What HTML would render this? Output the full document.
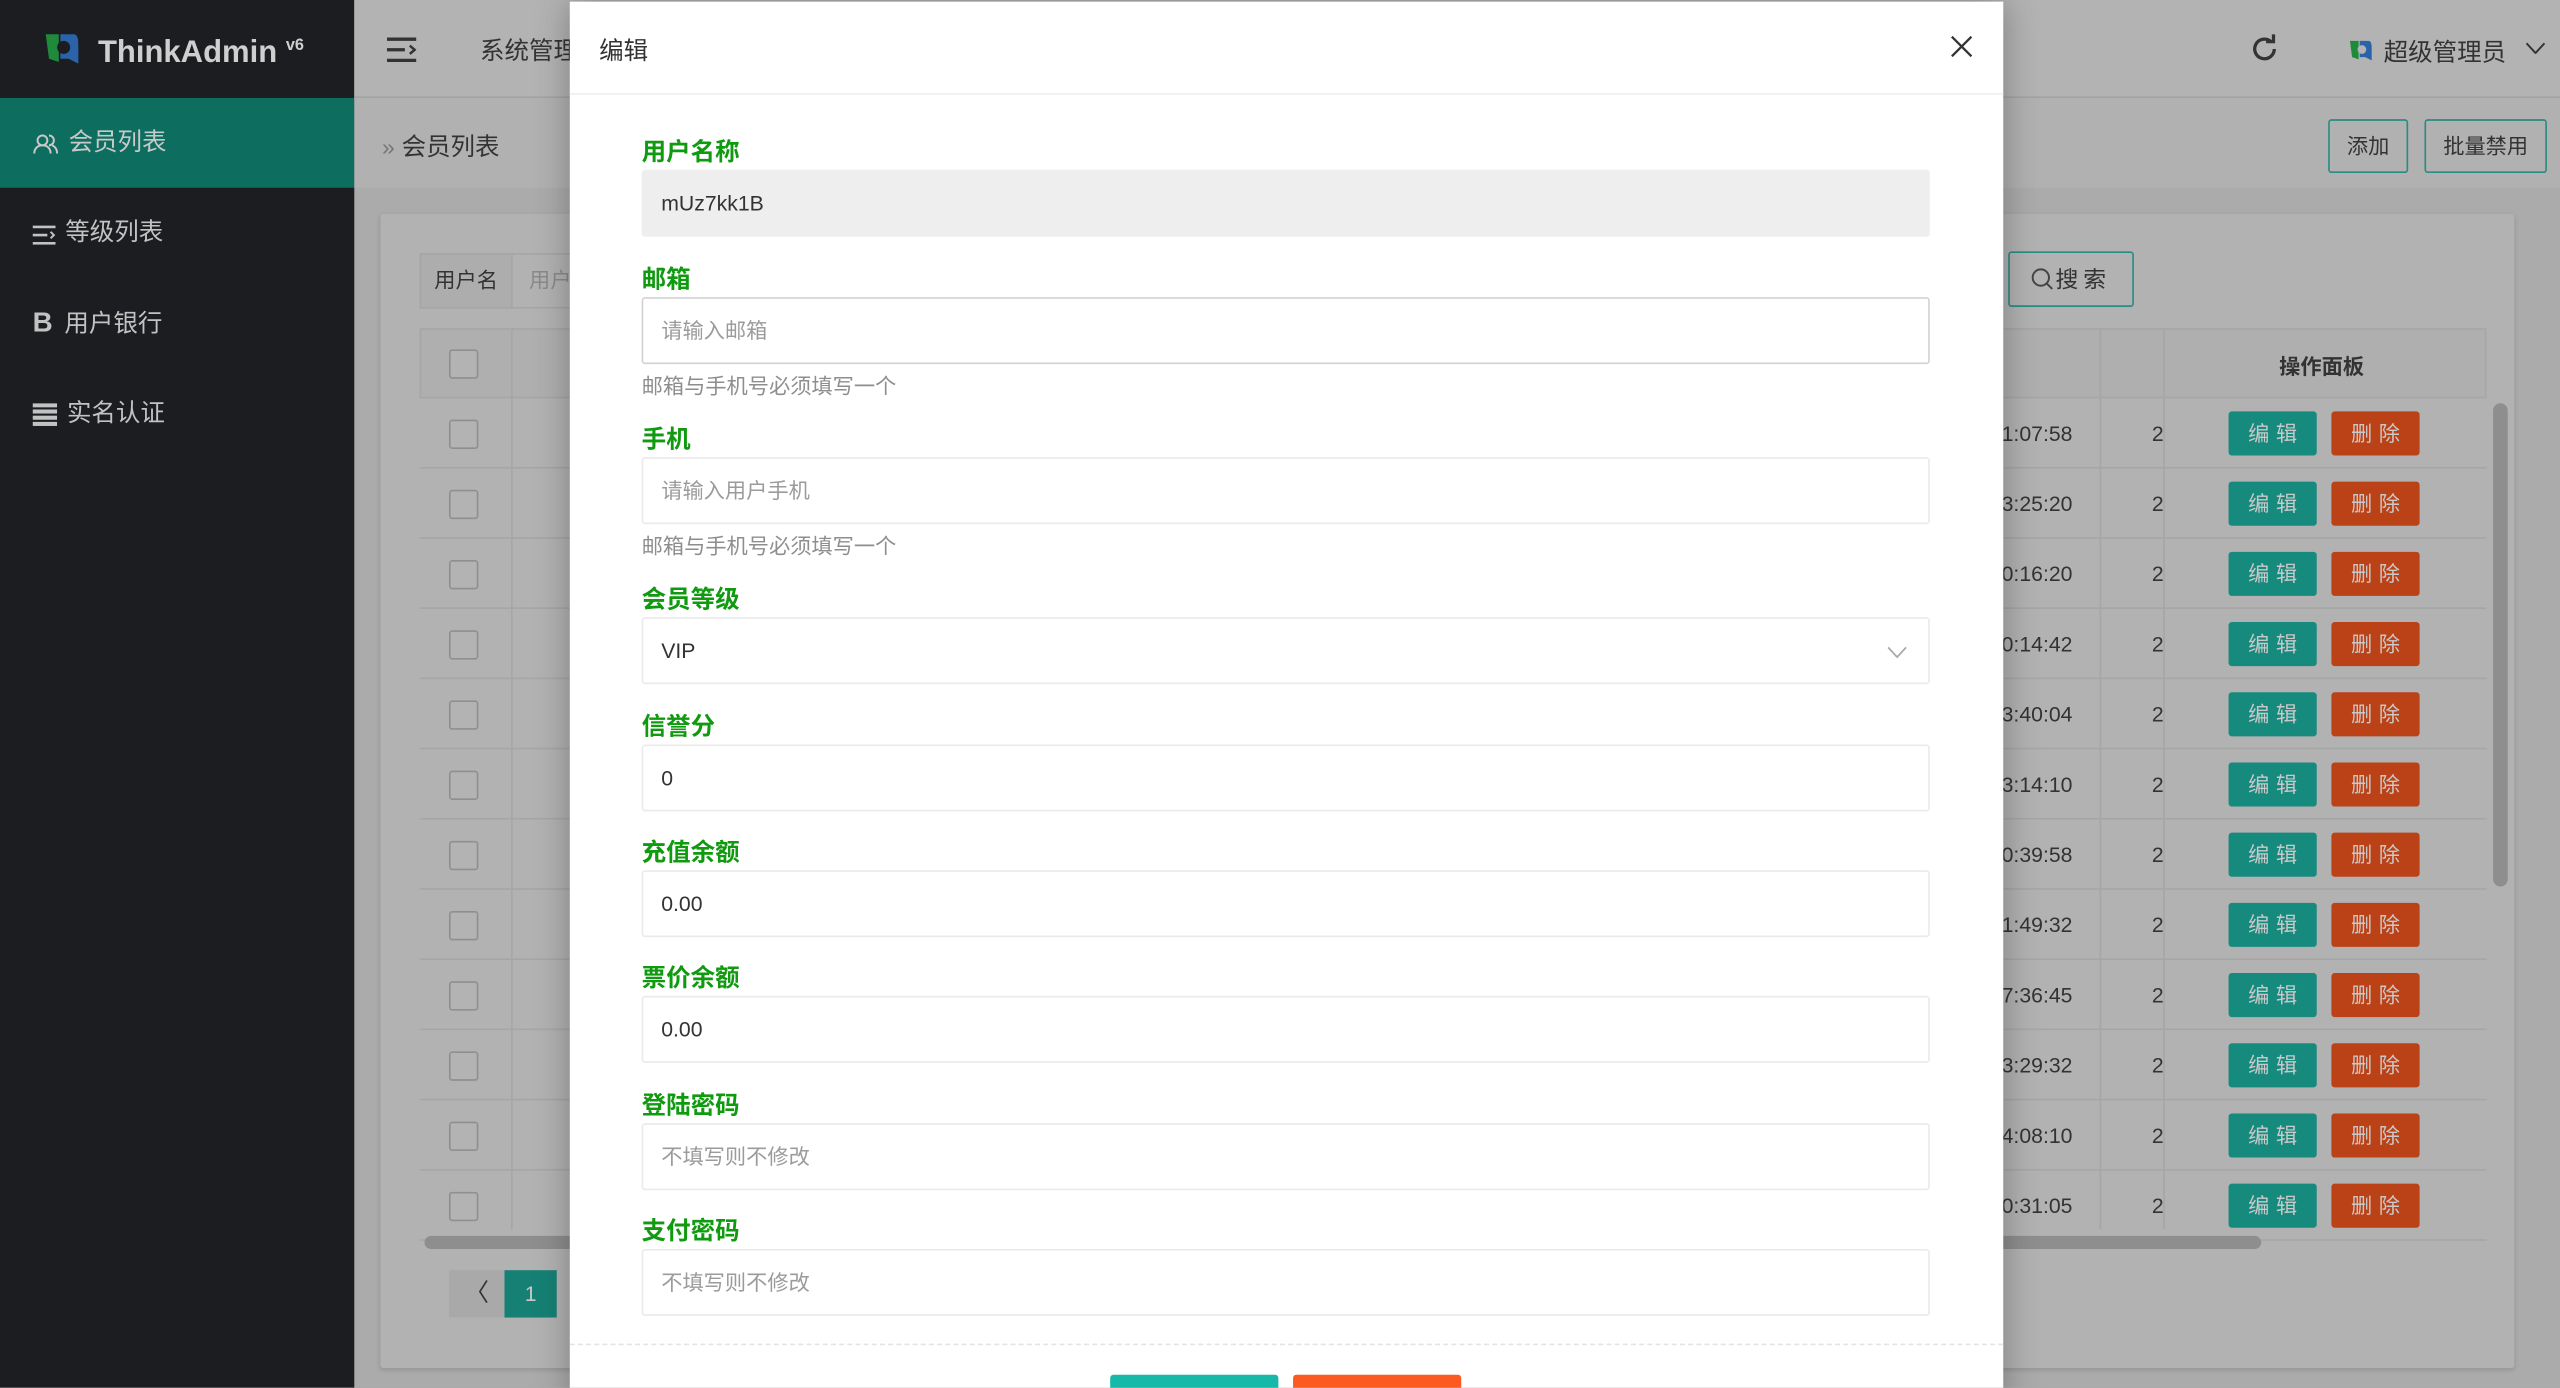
<!DOCTYPE html>
<html><head><meta charset="utf-8">
<style>
*{box-sizing:border-box;margin:0;padding:0}
html,body{width:2560px;height:1387px;overflow:hidden;background:#ababab}
body{font-family:"Liberation Sans","Noto Sans CJK SC",sans-serif;color:#333}
#s{position:absolute;left:0;top:0;width:1568px;height:850px;transform:scale(1.63265);transform-origin:0 0;overflow:hidden;background:#ababab}
.abs{position:absolute}
.side{left:0;top:0;width:217px;height:850px;background:#1c1d21}
.logo{left:26px;top:18px;font-size:19px;font-weight:bold;color:#cfcfcf}
.mi{left:0;width:217px;height:55px;line-height:55px;color:#c2c2c2;font-size:15px;padding-left:20px}
.mi svg{vertical-align:-3px;margin-right:6px}
.hdr{left:217px;top:0;width:1351px;height:60px;background:#b3b3b3;border-bottom:1px solid #a3a3a3}
.bc{left:217px;top:60px;width:1351px;height:55px;background:#b1b1b1}
.card{left:233px;top:131px;width:1307px;height:707px;background:#b2b2b2;border-radius:2px;box-shadow:0 1px 3px rgba(0,0,0,.15)}
.obtn{border:1px solid #2a8c80;border-radius:2px;color:#333;font-size:13px;text-align:center}
.cb{width:18px;height:18px;border:1px solid #8f8f8f;border-radius:2px;background:#b3b3b3}
.row{left:257px;width:1266px;height:43px;border-bottom:1px solid #a6a6a6}
.bt{width:54px;height:27px;border-radius:2px;color:#c9c9c9;font-size:13px;text-align:center;line-height:27px;letter-spacing:4px;text-indent:4px}
.modal{left:349px;top:1px;width:878px;height:860px;background:#fff;box-shadow:0 0 20px rgba(0,0,0,.3)}
.lab{left:44px;font-size:15px;font-weight:bold;color:#109a10}
.inp{left:44px;width:789px;height:41px;border:1px solid #eaeaea;border-radius:2px;font-size:13px;line-height:39px;padding-left:11px;color:#333;background:#fff}
.ph{color:#9b9b9b}
.help{left:44px;font-size:13px;color:#8e8e8e}
</style></head><body><div id="s">
<div class="abs side"></div>
<div class="abs logo"><svg width="24" height="24" viewBox="0 0 24 24" style="vertical-align:-4px;margin-right:10px"><path d="M2 3h8v17l-6-2z" fill="#1f8a3c"/><path d="M11 3h8c3 0 3 4 3 8v10l-6-3h-5z" fill="#2a63a8"/><circle cx="13" cy="11" r="4" fill="#1c1d21"/></svg>ThinkAdmin <sup style="font-size:10px">v6</sup></div>
<div class="abs mi" style="top:60px;background:#0d6e60;color:#c9c9c9"><svg width="16" height="14" viewBox="0 0 16 14" fill="none" stroke="#c9c9c9" stroke-width="1.2"><circle cx="6" cy="5" r="3"/><path d="M1 13c0-3 2-5 5-5s5 2 5 5"/><path d="M10 2a3 3 0 0 1 0 6M12 8c2 1 3 3 3 5"/></svg>会员列表</div>
<div class="abs mi" style="top:115px"><svg width="14" height="12" viewBox="0 0 14 12" fill="none" stroke="#c2c2c2" stroke-width="1.6"><path d="M0 1h14M0 6h9M0 11h14"/><path d="M11 4l2 2-2 2" stroke-width="1.2"/></svg>等级列表</div>
<div class="abs mi" style="top:170px"><b style="font-size:17px;margin-right:3px">B</b> 用户银行</div>
<div class="abs mi" style="top:226px"><svg width="15" height="14" viewBox="0 0 15 14" fill="#c2c2c2"><rect y="0" width="15" height="2.5"/><rect y="3.8" width="15" height="2.5"/><rect y="7.6" width="15" height="2.5"/><rect y="11.4" width="15" height="2.5"/></svg>实名认证</div>

<div class="abs hdr"></div>
<svg class="abs" style="left:237px;top:23px" width="18" height="15" viewBox="0 0 18 15" fill="none" stroke="#333" stroke-width="2"><path d="M0 1h18M0 7.5h11M0 14h18"/><path d="M14 5l3 2.5-3 2.5" stroke-width="1.5"/></svg>
<div class="abs" style="left:294px;top:20px;font-size:15px;color:#333">系统管理</div>
<svg class="abs" style="left:1378px;top:21px" width="18" height="18" viewBox="0 0 18 18" fill="none" stroke="#333" stroke-width="2"><path d="M15 9a6 6 0 1 1-2-4.5"/><path d="M10 4.5h4.5V0" stroke-width="2"/></svg>
<div class="abs" style="left:1438px;top:21px;font-size:15px;color:#333"><svg width="16" height="16" viewBox="0 0 24 24" style="vertical-align:-2px;margin-right:6px"><path d="M2 3h8v17l-6-2z" fill="#1f8a3c"/><path d="M11 3h8c3 0 3 4 3 8v10l-6-3h-5z" fill="#2a63a8"/><circle cx="13" cy="11" r="4" fill="#b3b3b3"/></svg>超级管理员</div>
<svg class="abs" style="left:1547px;top:26px" width="12" height="7" viewBox="0 0 12 7" fill="none" stroke="#333" stroke-width="1.2"><path d="M0.5 0.5l5.5 6 5.5-6"/></svg>

<div class="abs bc"></div>
<div class="abs" style="left:234px;top:79px;font-size:15px;color:#333"><span style="color:#777;font-size:14px">»</span> 会员列表</div>
<div class="abs obtn" style="left:1426px;top:73px;width:49px;height:33px;line-height:31px">添加</div>
<div class="abs obtn" style="left:1485px;top:73px;width:75px;height:33px;line-height:31px">批量禁用</div>

<div class="abs card"></div>
<div class="abs" style="left:257px;top:155px;width:57px;height:34px;border:1px solid #a6a6a6;background:#adadad;font-size:13px;line-height:32px;text-align:center">用户名</div>
<div class="abs" style="left:313px;top:155px;width:60px;height:34px;border:1px solid #a6a6a6;font-size:13px;line-height:32px;padding-left:10px;color:#8a8a8a">用户</div>
<div class="abs obtn" style="left:1230px;top:154px;width:77px;height:34px;line-height:32px;font-size:14px;letter-spacing:3px"><svg width="14" height="14" viewBox="0 0 14 14" fill="none" stroke="#444" stroke-width="1.2" style="vertical-align:-2px;margin-right:1px"><circle cx="6" cy="6" r="5"/><path d="M9.5 9.5l3.5 3.5"/></svg>搜索</div>
<div class="abs" style="left:257px;top:201px;width:1266px;height:43px;border:1px solid #a6a6a6;background:#afafaf"></div>
<div class="abs" style="left:1396px;top:214px;font-size:13px;font-weight:bold">操作面板</div>
<div class="abs" style="left:1325px;top:201px;width:1px;height:552px;background:#a6a6a6"></div>
<div class="abs" style="left:1286px;top:201px;width:1px;height:552px;background:#a6a6a6"></div>
<div class="abs" style="left:313px;top:201px;width:1px;height:552px;background:#a6a6a6"></div>
<div class="abs cb" style="left:275px;top:214px"></div>
<div id="rows"></div>
<div class="abs" style="left:1527px;top:247px;width:9px;height:296px;border-radius:5px;background:#8e8e8e"></div>
<div class="abs" style="left:260px;top:757px;width:1125px;height:8px;border-radius:4px;background:#8e8e8e"></div>
<div class="abs" style="left:275px;top:778px;width:34px;height:29px;background:#a9a9a9;text-align:center;line-height:29px;font-size:15px">〈</div>
<div class="abs" style="left:309px;top:778px;width:32px;height:29px;background:#168074;color:#c9c9c9;text-align:center;line-height:29px;font-size:13px">1</div>

<div class="abs modal">
<div class="abs" style="left:18px;top:19px;font-size:15px;color:#333">编辑</div>
<svg class="abs" style="left:846px;top:21px" width="13" height="13" viewBox="0 0 13 13" fill="none" stroke="#333" stroke-width="1.4"><path d="M0.5 0.5l12 12M12.5 0.5l-12 12"/></svg>
<div class="abs" style="left:0;top:56px;width:878px;height:1px;background:#eee"></div>

<div class="abs lab" style="top:81px">用户名称</div>
<div class="abs inp" style="top:103px;background:#eeeeee;border-color:#eee">mUz7kk1B</div>
<div class="abs lab" style="top:159px">邮箱</div>
<div class="abs inp ph" style="top:181px;border-color:#d2d2d2">请输入邮箱</div>
<div class="abs help" style="top:225px">邮箱与手机号必须填写一个</div>
<div class="abs lab" style="top:257px">手机</div>
<div class="abs inp ph" style="top:279px">请输入用户手机</div>
<div class="abs help" style="top:323px">邮箱与手机号必须填写一个</div>
<div class="abs lab" style="top:355px">会员等级</div>
<div class="abs inp" style="top:377px">VIP<svg style="position:absolute;right:13px;top:17px" width="12" height="7" viewBox="0 0 12 7" fill="none" stroke="#aaa" stroke-width="1.1"><path d="M0.5 0.5l5.5 6 5.5-6"/></svg></div>
<div class="abs lab" style="top:433px">信誉分</div>
<div class="abs inp" style="top:455px">0</div>
<div class="abs lab" style="top:510px">充值余额</div>
<div class="abs inp" style="top:532px">0.00</div>
<div class="abs lab" style="top:587px">票价余额</div>
<div class="abs inp" style="top:609px">0.00</div>
<div class="abs lab" style="top:665px">登陆密码</div>
<div class="abs inp ph" style="top:687px">不填写则不修改</div>
<div class="abs lab" style="top:742px">支付密码</div>
<div class="abs inp ph" style="top:764px">不填写则不修改</div>
<div class="abs" style="left:0;top:822px;width:878px;border-top:1px dashed #e4e4e4"></div>
<div class="abs" style="left:331px;top:841px;width:103px;height:30px;background:#16b8a8;border-radius:2px"></div>
<div class="abs" style="left:443px;top:841px;width:103px;height:30px;background:#fb5a20;border-radius:2px"></div>
</div>
</div>
<script>
var t=["1:07:58","3:25:20","0:16:20","0:14:42","3:40:04","3:14:10","0:39:58","1:49:32","7:36:45","3:29:32","4:08:10","0:31:05"],h="";
for(var i=0;i<12;i++){var y=244+i*43;
h+='<div class="abs row" style="top:'+y+'px"></div>';
h+='<div class="abs cb" style="left:275px;top:'+(y+13)+'px"></div>';
h+='<div class="abs" style="left:1226px;top:'+(y+14)+'px;font-size:13px">'+t[i]+'</div>';
h+='<div class="abs" style="left:1318px;top:'+(y+14)+'px;font-size:13px">2</div>';
h+='<div class="abs bt" style="left:1365px;top:'+(y+8)+'px;background:#178a7e">编辑</div>';
h+='<div class="abs bt" style="left:1428px;top:'+(y+8)+'px;background:#bb4117">删除</div>';}
document.getElementById("rows").outerHTML=h;
</script>
</body></html>
